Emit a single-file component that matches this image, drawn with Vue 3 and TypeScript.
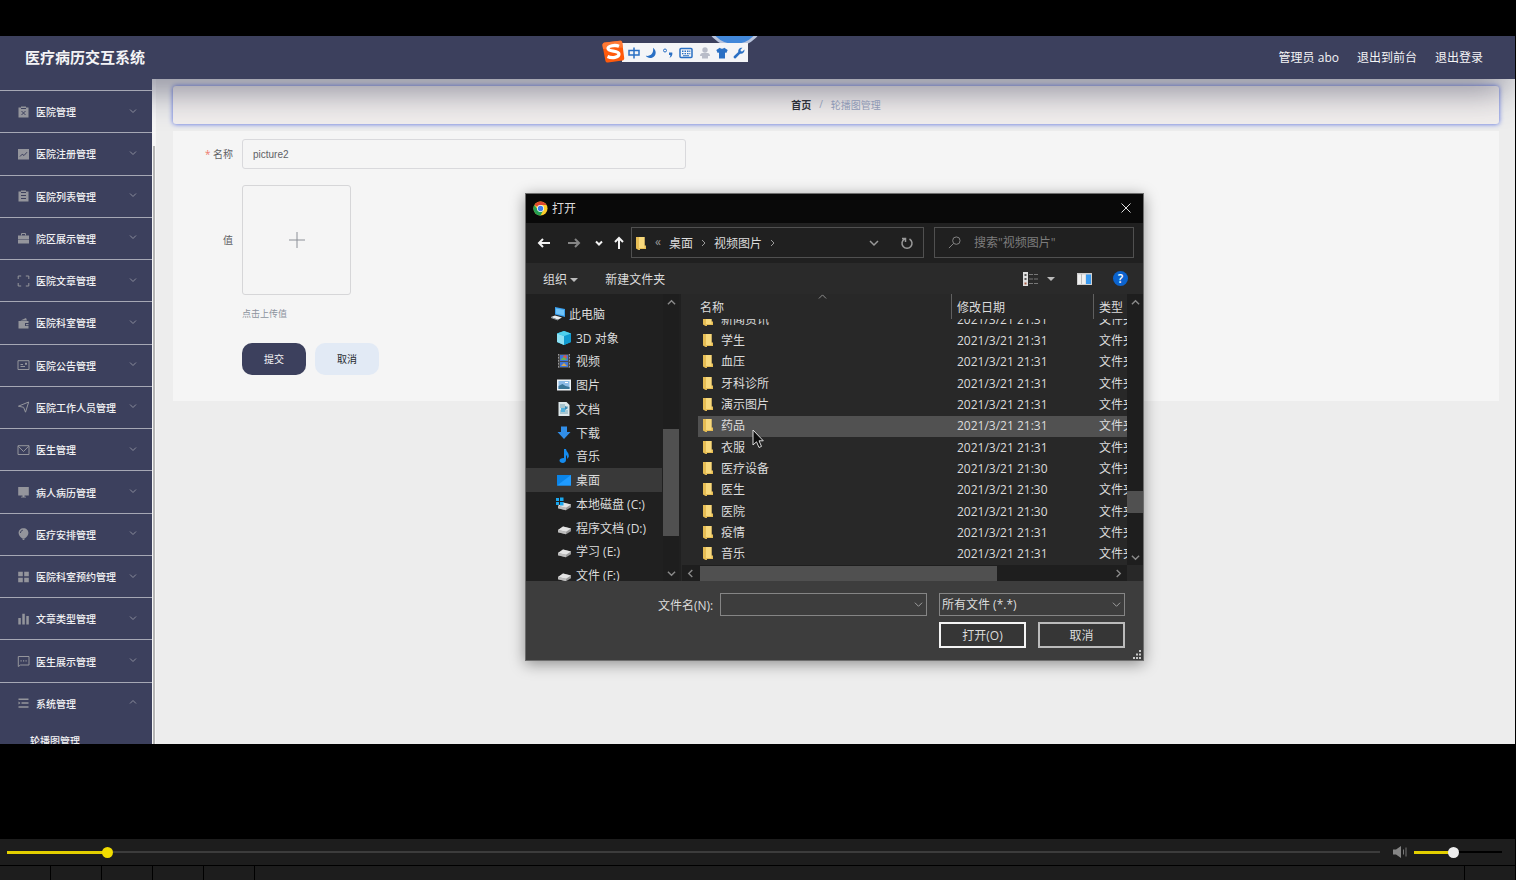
<script setup lang="ts">
import { computed, ref } from 'vue'

interface MenuItem {
  label: string
  icon: string
  open?: boolean
}

interface TreeItem {
  label: string
  icon: string
  root?: boolean
}

const menu: MenuItem[] = [
  { label: '医院管理', icon: '<path class="f" d="M1 1.500h2.500V.500h5v1H11v10H1z"/><path class="d" d="M4 5l4 4M8 5l-4 4M3.500 2.500h5"/>' },
  { label: '医院注册管理', icon: '<path class="f" d="M.5 1h11v10.500H.5z"/><path class="d" d="M2.500 8.500l2.200-2.300 1.800 1.300 3-3.300"/>' },
  { label: '医院列表管理', icon: '<path class="f" d="M1 1.500h2.500V.500h5v1H11v10H1z"/><path class="d" d="M3.500 5.500h5M3.500 8.500h5M3.500 2.500h5"/>' },
  { label: '院区展示管理', icon: '<path class="f" d="M.5 3.500h11v3.500H.5zM.5 7.500h11v4H.5z"/><path class="s" d="M4 3.500v-2h4v2"/>' },
  { label: '医院文章管理', icon: '<path class="s" d="M.7 4V1h3M8.300 1h3v3M11.300 8v3h-3M3.700 11h-3V8"/>' },
  { label: '医院科室管理', icon: '<path class="f" d="M1 4h10v2H7.500v3H11v2.500H1zM3 3.500L8.500 1l1 2.500zM8.500 7H11v1.200H8.500z"/>' },
  { label: '医院公告管理', icon: '<path class="s" d="M.5 1.700h11v8.800H.5zM3 7.500h4.500M3 5.500h2.500"/><path class="f" d="M7.500 3.800h2v2h-2z"/>' },
  { label: '医院工作人员管理', icon: '<path class="s" d="M.9 5.200L11.200 1 8 11.200 6.100 6.300z"/>' },
  { label: '医生管理', icon: '<path class="s" d="M.5 1.700h11v8.800H.5zM.8 2.200L6 7.500l5.200-5.300"/>' },
  { label: '病人病历管理', icon: '<path class="f" d="M.7 1h10.600v8.500H.7zM5 9.500h2v1.200h1.500v.8h-5v-.8H5z"/>' },
  { label: '医疗安排管理', icon: '<path class="f" d="M6 .2c3 0 4.900 2.100 4.900 4.800C10.900 7 9.200 9 7.500 10.200h-3C2.800 9 1.100 7 1.100 5 1.100 2.300 3 .2 6 .2zM4.800 10.500h2.400l-.5 1.500H5.300z"/><path class="d" d="M3 5c0-1.500.8-2.500 2.300-2.800"/>' },
  { label: '医院科室预约管理', icon: '<path class="f" d="M.7.7h4.600v4.600H.7zM6.700.7h4.600v4.600H6.700zM.7 6.700h4.600v4.600H.7zM6.700 6.700h4.600v4.600H6.700z"/>' },
  { label: '文章类型管理', icon: '<path class="f" d="M.8 5h2.500v6.500H.8zM4.800.8h2.500v10.700H4.800zM8.800 3h2.500v8.500H8.800z"/>' },
  { label: '医生展示管理', icon: '<path class="s" d="M.8 1.500h10.700v8.500H3l-2.200 1.500z"/><path class="f" d="M3 5.200h1.200v1.200H3zM5.500 5.200h1.200v1.200H5.500zM8 5.200h1.200v1.200H8z"/>' },
  { label: '系统管理', icon: '<path class="f" d="M1 1.500h10v1.500H1zM4 5.300h7v1.500H4zM1 9.200h10v1.500H1zM1 4.500v3l2-1.500z"/>', open: true },
]

const drive = '<path d="M2 10l5-3.500 8 2v2.700l-5 3-8-2z" fill="#999"/><path d="M2 10l5-3.500 8 2-5 3.200z" fill="#e4e4e4"/><path d="M2 10v2.200l8 2v-2.500z" fill="#bdbdbd"/>'

const tree: TreeItem[] = [
  { label: '此电脑', root: true, icon: '<path d="M5 1l10 2v8L5 8.500z" fill="#3aa0ef"/><path d="M6 2.500l8 1.500v5.500L6 7.500z" fill="#70c4fa"/><path d="M1 11l4-1.500 7 2-4 2.200z" fill="#e8edf0"/><path d="M1 11v1l7 2.500v-.8z" fill="#9ba8b0"/>' },
  { label: '3D 对象', icon: '<path d="M8 1l7 2.500v8.500l-7 3-7-3V3.500z" fill="#24b3df"/><path d="M1 3.500L8 6v9l-7-3z" fill="#8de1f3"/><path d="M8 6l7-2.500V12l-7 3z" fill="#0f9ad0"/><path d="M1 3.500L8 1l7 2.500L8 6z" fill="#4fd0ed"/>' },
  { label: '视频', icon: '<path d="M2 1h12v14H2z" fill="#4a4a4a"/><path d="M2.500 1v14M13.500 1v14" stroke="#999" stroke-dasharray="1.500 1.500"/><path d="M4 2h8v6H4zM4 9h8v5H4z" fill="#4076d8"/><path d="M7 3l3-1 1 3-3 1z" fill="#dc5748"/><path d="M5 6l3-2 3 3H5z" fill="#64b25a"/><path d="M5 13l3-3 3 3z" fill="#d6a652"/>' },
  { label: '图片', icon: '<path d="M1 2.500h14v11H1z" fill="#eef3f6"/><path d="M2.500 4h11v8h-11z" fill="#8dbbe6"/><path d="M2.500 12V9l4-2 3 2 4 1v2z" fill="#397597"/><path d="M9 5h3v1H9z" fill="#fff"/>' },
  { label: '文档', icon: '<path d="M2.500 1h8l3 3v11h-11z" fill="#dde7ea"/><path d="M4 4h5M4 6h8M4 10h8M4 12h8" stroke="#73a4b5"/><path d="M5 7h4v4H5z" fill="#52b1dc"/><path d="M9 5l3 2-3 2z" fill="#3587b4"/>' },
  { label: '下载', icon: '<path d="M5 1.500h6V7h3.500L8 14 1.500 7H5z" fill="#318ee8"/>' },
  { label: '音乐', icon: '<path d="M8 1h2c.4 3 3.300 3.500 2.800 8L11 11c.7-3-1-4-1-4v5c0 1.600-1.400 3-3.200 3C5 15 3.500 14 3.500 12.500S5 10.200 8 10z" fill="#158bee"/>' },
  { label: '桌面', icon: '<path d="M1 3h14v10.500H1z" fill="#0a84e8"/><path d="M1 13.500L15 3v10.500z" fill="#1f9bff"/>' },
  { label: '本地磁盘 (C:)', icon: drive + '<path d="M0 2h3v3H0zM4 1.500h3.500V5H4zM0 6h3v3H0zM4 6h3.500v3.500H4z" fill="#1aa8ef"/>' },
  { label: '程序文档 (D:)', icon: drive },
  { label: '学习 (E:)', icon: drive },
  { label: '文件 (F:)', icon: drive },
]

const files: [string, string][] = [
  ['新闻资讯', '31'],
  ['学生', '31'],
  ['血压', '31'],
  ['牙科诊所', '31'],
  ['演示图片', '31'],
  ['药品', '31'],
  ['衣服', '31'],
  ['医疗设备', '30'],
  ['医生', '30'],
  ['医院', '30'],
  ['疫情', '31'],
  ['音乐', '31'],
]

const title = ref('picture2')
const fileName = ref('')
const search = ref('')
const filter = ref('all')
const position = ref(70)
const volume = ref(44)
const positionFill = computed(() => ({ '--fill': position.value / 10 + '%' }))
const volumeFill = computed(() => ({ '--fill': volume.value + '%' }))
</script>

<template>
  <div class="player">
    <div class="stage">
      <header class="topbar">
        <h1>医疗病历交互系统</h1>
        <nav class="account">
          <span>管理员 abo</span>
          <a href="#front">退出到前台</a>
          <a href="#logout">退出登录</a>
        </nav>
      </header>

      <div class="body">
        <aside class="sidebar">
          <button v-for="m in menu" :key="m.label" type="button" class="menu-item">
            <svg class="menu-icon" viewBox="0 0 12 12" v-html="m.icon"></svg>
            <span>{{ m.label }}</span>
            <svg class="arrow" :class="{ up: m.open }" viewBox="0 0 8 8"><path d="M1 2.500l3 3 3-3" /></svg>
          </button>
          <a class="submenu" href="#carousel">轮播图管理</a>
        </aside>
        <div class="side-scroll"></div>
        <main class="content">
          <nav class="crumbs">
            <a href="#home">首页</a><i>/</i><span>轮播图管理</span>
          </nav>
          <form class="form" @submit.prevent>
            <label class="label" for="name"><em>*</em> 名称</label>
            <input id="name" v-model="title" class="name" type="text" />
            <label class="label" for="upload">值</label>
            <div class="value">
              <button id="upload" type="button" class="upload" aria-label="上传">
                <svg viewBox="0 0 18 18"><path d="M9 1v16M1 9h16" /></svg>
              </button>
              <p>点击上传值</p>
            </div>
            <div class="actions">
              <button type="submit" class="primary">提交</button>
              <button type="button">取消</button>
            </div>
          </form>
        </main>
      </div>

      <div class="ball"></div>
      <div class="ime">
        <svg class="sogou" viewBox="0 0 24 24">
          <path d="M4 2.500L19 .8c1.300-.1 2 .5 2.200 1.700l2 15.500c.1 1.300-.4 2.200-1.700 2.500L7 22.500c-1.400.2-2.300-.4-2.600-1.700L1.500 5.500C1.300 3.700 2.200 2.700 4 2.500z" fill="#ff5a0c" />
          <path d="M4 2.500L19 .8c1.300-.1 2 .5 2.200 1.700l.6 5L2 9 1.500 5.500C1.300 3.700 2.200 2.700 4 2.500z" fill="#ff7a35" />
          <path d="M18 6.200C14 4.500 6.800 5.800 7 8.700c.3 3.300 11 1.600 11 5.300 0 3.500-7 4.600-11.500 2.500" fill="none" stroke="#fff" stroke-width="3.200" />
        </svg>
        <svg viewBox="0 0 12 12"><path d="M1 3.500h10v4.500H1zM6 .5v11" class="line" /></svg>
        <svg viewBox="0 0 12 12"><path d="M8 .8c4 3 3.300 8-.5 9.700-2.800 1.200-5.500.2-6.700-1.700C5.500 9.500 9 6.500 8 .8z" /></svg>
        <svg viewBox="0 0 12 12"><circle cx="3" cy="3.500" r="1.500" class="thin" /><path d="M7 5.500h3.200c.7 2.300-.7 4.800-2.700 5.200.7-1 1-1.800.8-2.700H7z" /></svg>
        <svg class="kb" viewBox="0 0 14 12"><rect x="1" y="1.500" width="12" height="9" rx="1" class="line" /><path d="M3 3.500h1.500V5H3zM5.500 3.500H7V5H5.500zM8 3.500h1.500V5H8zM10.300 3.500h1V5h-1zM3 6h1.500v1.200H3zM5.500 6H7v1.200H5.500zM8 6h1.500v1.200H8zM10.300 6h1v1.200h-1zM4 8.300h6v1H4z" /></svg>
        <svg class="muted" viewBox="0 0 12 12"><circle cx="6" cy="3" r="2.700" /><path d="M3 6h6c1.500.5 2 1.500 2 3H9v2.500H3V9H1c0-1.500.5-2.500 2-3z" /></svg>
        <svg viewBox="0 0 12 12"><path d="M3.800.8c1 1.200 3.400 1.200 4.400 0L11.700 3 10.300 6 9 5.500v6H3v-6L1.700 6 .3 3z" /></svg>
        <svg viewBox="0 0 12 12"><path d="M.8 9.300l4.500-4.200C4.800 2.500 6.700.3 9.500.7L7.500 2.800l.3 1.500 1.500.3 2.200-2c.3 2.900-2 4.600-4.400 4.100L2.700 11.200C1.500 12 0 10.400.8 9.300z" /></svg>
      </div>

      <section class="dialog" role="dialog" aria-label="打开">
        <div class="caption">
          <svg class="chrome" viewBox="0 0 16 16">
            <circle cx="8" cy="8" r="7.500" fill="#fbcc2b" />
            <path d="M8 8L1.500 4.250A7.500 7.500 0 0 1 14.500 4.250H8z" fill="#e0492f" />
            <path d="M1.500 4.250A7.500 7.500 0 0 0 8 15.500l3-5.700-5.500 0z" fill="#259f52" />
            <circle cx="8" cy="8" r="3.700" fill="#fff" /><circle cx="8" cy="8" r="2.900" fill="#3b7ded" />
          </svg>
          <span>打开</span>
          <button type="button" class="close" aria-label="关闭"><svg viewBox="0 0 12 12"><path d="M1.500 1.500l9 9M10.500 1.500l-9 9" /></svg></button>
        </div>

        <div class="navrow">
          <button type="button" class="bright" aria-label="后退"><svg viewBox="0 0 14 14"><path d="M13 7H2M6 3L2 7l4 4" /></svg></button>
          <button type="button" class="dim" aria-label="前进"><svg viewBox="0 0 14 14"><path d="M1 7h11M8 3l4 4-4 4" /></svg></button>
          <button type="button" class="bright recent" aria-label="最近"><svg viewBox="0 0 10 14"><path d="M2 5.500l3 3 3-3" /></svg></button>
          <button type="button" class="bright" aria-label="上移"><svg viewBox="0 0 14 14"><path d="M7 13V2M3 6l4-4 4 4" /></svg></button>
          <div class="address">
            <svg class="folder" viewBox="0 0 12 14"><path d="M1 1h8.500v8.500h1.500V13H5v1H3.500L1 12.500z" fill="#e6bd55" /><path d="M4 1h5.500v11H4z" fill="#f8d97c" /></svg>
            <small>«</small>
            <span>桌面</span>
            <svg class="sep" viewBox="0 0 6 10"><path d="M1 2l3 3-3 3" /></svg>
            <span>视频图片</span>
            <svg class="sep" viewBox="0 0 6 10"><path d="M1 2l3 3-3 3" /></svg>
            <svg class="drop" viewBox="0 0 10 10"><path d="M1 3l4 4 4-4" /></svg>
            <svg class="reload" viewBox="0 0 14 14"><path d="M4.500 3A5 5 0 1 0 9.500 3M2 2.500h3.500V6" /></svg>
          </div>
          <label class="search">
            <svg viewBox="0 0 14 14"><circle cx="9" cy="5" r="4" /><path d="M6 8l-5 5" /></svg>
            <input v-model="search" type="text" placeholder='搜索"视频图片"' aria-label="搜索" />
          </label>
        </div>

        <div class="tools">
          <button type="button">组织 <i class="caret"></i></button>
          <button type="button" class="new">新建文件夹</button>
          <button type="button" class="view" aria-label="更改视图">
            <svg viewBox="0 0 15 14"><path d="M0 0h5v14H0z" fill="#dedede" /><path d="M1.500 2h2v2h-2z" fill="#555" /><path d="M1.500 6h2v2h-2z" fill="#555" /><path d="M1.500 10.500h2v2h-2z" fill="#a65a43" /><path d="M6 2.500h4M11 2.500h4M6 7h4M11 7h4M6 11.500h4M11 11.500h4" stroke="#777" /></svg>
            <i class="caret"></i>
          </button>
          <button type="button" class="pane" aria-label="预览窗格">
            <svg viewBox="0 0 15 12"><path d="M0 0h15v12H0z" fill="#cfcfcf" /><path d="M1 1.500h7.500V11H1z" fill="#f0f0f0" /><path d="M4.500 1v10" stroke="#bbb" /><path d="M9 1.500h5V11H9z" fill="#3a9af0" /></svg>
          </button>
          <button type="button" class="help" aria-label="帮助">?</button>
        </div>

        <div class="panes">
          <ul class="tree">
            <li v-for="t in tree" :key="t.label" :class="{ root: t.root, on: t.label === '桌面' }">
              <svg viewBox="0 0 16 16" v-html="t.icon"></svg>{{ t.label }}
            </li>
          </ul>
          <div class="vbar tree-bar">
            <svg viewBox="0 0 10 10"><path d="M1 7l4-4 4 4" /></svg>
            <div class="track"><div class="thumb"></div></div>
            <svg viewBox="0 0 10 10"><path d="M1 3l4 4 4-4" /></svg>
          </div>
          <div class="list">
            <div class="rows">
              <table>
                <colgroup><col class="c-name" /><col class="c-date" /><col /></colgroup>
                <thead>
                  <tr>
                    <th>名称<svg class="sort" viewBox="0 0 10 6"><path d="M1 5l4-4 4 4" /></svg></th>
                    <th>修改日期</th>
                    <th>类型</th>
                  </tr>
                </thead>
                <tbody>
                  <tr v-for="f in files" :key="f[0]" :class="{ hover: f[0] === '药品' }">
                    <td>
                      <svg class="folder" viewBox="0 0 12 14"><path d="M1 1h8.500v8.500h1.500V13H5v1H3.500L1 12.500z" fill="#e6bd55" /><path d="M4 1h5.500v11H4z" fill="#f8d97c" /></svg>{{ f[0] }}
                    </td>
                    <td>2021/3/21 21:{{ f[1] }}</td>
                    <td>文件夹</td>
                  </tr>
                </tbody>
              </table>
            </div>
            <div class="vbar list-bar">
              <svg viewBox="0 0 10 10"><path d="M1 7l4-4 4 4" /></svg>
              <div class="track"><div class="thumb"></div></div>
              <svg viewBox="0 0 10 10"><path d="M1 3l4 4 4-4" /></svg>
            </div>
            <div class="hbar">
              <svg viewBox="0 0 10 10"><path d="M7 1L3 5l4 4" /></svg>
              <div class="track"><div class="thumb"></div></div>
              <svg viewBox="0 0 10 10"><path d="M3 1l4 4-4 4" /></svg>
            </div>
          </div>
        </div>

        <div class="foot">
          <label for="file">文件名(N):</label>
          <div class="combo">
            <input id="file" v-model="fileName" type="text" />
            <svg viewBox="0 0 10 10"><path d="M1 3l4 4 4-4" /></svg>
          </div>
          <div class="combo filter">
            <select v-model="filter" aria-label="文件类型">
              <option value="all">所有文件 (*.*)</option>
            </select>
            <svg viewBox="0 0 10 10"><path d="M1 3l4 4 4-4" /></svg>
          </div>
          <div class="buttons">
            <button type="button" class="default">打开(O)</button>
            <button type="button">取消</button>
          </div>
          <svg class="grip" viewBox="0 0 10 10"><path d="M7 0h2v2H7zM4 3.500h2v2H4zM7 3.500h2v2H7zM1 7h2v2H1zM4 7h2v2H4zM7 7h2v2H7z" /></svg>
        </div>
      </section>

      <svg class="cursor" viewBox="0 0 12 20"><path d="M1 1v15l3.500-3.200L7 18.500l2.500-1.100L7 11.800h4.300z" /></svg>
    </div>

    <div class="controls">
      <input v-model.number="position" class="seek" type="range" min="0" max="1000" :style="positionFill" aria-label="进度" />
      <svg class="speaker" viewBox="0 0 16 14"><path d="M1 4.500h3L9 1v12L4 9.500H1z" fill="#858585" /><path d="M11.500 4.500v5M14 2.500v9" stroke="#777" /></svg>
      <input v-model.number="volume" class="volume" type="range" min="0" max="100" :style="volumeFill" aria-label="音量" />
    </div>
    <div class="strip"><i v-for="n in 5" :key="n"></i><i class="last"></i></div>
  </div>
</template>

<style>
body {
  margin: 0;
  background: #000;
}
</style>

<style scoped>
* {
  box-sizing: border-box;
}
button,
input,
select {
  font: inherit;
  color: inherit;
  background: none;
  border: 0;
  padding: 0;
  margin: 0;
  outline: 0;
}
a {
  color: inherit;
  text-decoration: none;
}
svg {
  display: block;
  flex: none;
}
i,
em {
  font-style: normal;
}
.player {
  height: 100vh;
  min-height: 600px;
  padding-top: 36px;
  display: flex;
  flex-direction: column;
  background: #000;
  font-family: "Open Sans", "Noto Sans CJK SC", sans-serif;
  font-size: 12px;
}
.stage {
  position: relative;
  flex: 1;
  min-height: 0;
  margin: 0 1px 95px 0;
  overflow: hidden;
  display: flex;
  flex-direction: column;
  background: #ededed;
}
.topbar {
  position: relative;
  z-index: 1;
  flex: none;
  height: 43px;
  padding: 0 32px 2px 25px;
  display: flex;
  align-items: center;
  justify-content: space-between;
  background: #3c405d;
  color: #f4f4f6;
  box-shadow: 0 16px 36px -8px rgba(48, 50, 78, 0.7);
}
h1 {
  margin: 0;
  font-size: 15px;
  font-weight: 700;
}
.account {
  display: flex;
  gap: 18px;
}
.body {
  flex: 1;
  min-height: 0;
  display: flex;
}
.sidebar {
  position: relative;
  z-index: 2;
  width: 152px;
  flex: none;
  padding-top: 11px;
  display: flex;
  flex-direction: column;
  background: #3c405d;
  color: #f2f2f4;
  font-size: 10px;
  font-weight: 500;
  overflow: hidden;
}
.menu-item {
  flex: 1;
  min-height: 0;
  padding: 0 15px 0 17px;
  display: flex;
  align-items: center;
  border-top: 1px solid #a6a8b5;
  text-align: left;
}
.menu-icon {
  width: 13px;
  height: 12px;
  margin-right: 6px;
}
.menu-icon :deep(.f) {
  fill: #94959c;
}
.menu-icon :deep(.s) {
  fill: none;
  stroke: #94959c;
}
.menu-icon :deep(.d) {
  fill: none;
  stroke: #3c405d;
}
.arrow {
  width: 8px;
  height: 8px;
  margin: 0 0 2px auto;
  fill: none;
  stroke: #8b8d9c;
}
.arrow.up {
  transform: rotate(180deg);
}
.submenu {
  flex: none;
  height: 20px;
  padding-left: 30px;
  line-height: 34px;
}
.side-scroll {
  flex: none;
  width: 4px;
  padding: 67px 1px 0;
  background: linear-gradient(#b5b5b5, #b5b5b5) content-box, #f6f6f6;
}
.content {
  flex: 1;
  min-width: 0;
  padding: 7px 16px 0 17px;
  font-size: 10px;
  color: #5f6165;
}
.crumbs {
  height: 38px;
  padding-bottom: 2px;
  display: flex;
  align-items: center;
  justify-content: center;
  gap: 8px;
  border-radius: 3px;
  background: #f1eeed;
  box-shadow: 0 0 5px #5068e0;
  color: #8f99b5;
}
.crumbs a {
  font-weight: 700;
  color: #2d3038;
}
.crumbs a,
.crumbs i,
.crumbs span {
  position: relative;
  z-index: 2;
}
.form {
  margin-top: 7px;
  padding: 8px 0 26px;
  display: grid;
  grid-template-columns: 60px minmax(0, 444px);
  gap: 16px 9px;
  background: #f5f5f5;
}
.label {
  text-align: right;
  line-height: 30px;
}
.label em {
  color: #ef7a6d;
}
.label[for='upload'] {
  line-height: 110px;
}
.name {
  height: 30px;
  padding: 0 10px;
  border: 1px solid #d9d9dc;
  border-radius: 3px;
  font-family: "Liberation Sans", "Noto Sans CJK SC", sans-serif;
}
.upload {
  display: grid;
  place-items: center;
  width: 109px;
  height: 110px;
  border: 1px solid #d6d6d8;
  border-radius: 3px;
}
.upload svg {
  width: 18px;
  fill: none;
  stroke: #8c9097;
}
.value p {
  margin: 12px 0 6px;
  font-size: 9px;
  line-height: 14px;
  color: #8c939d;
}
.actions {
  grid-column: 2;
  display: flex;
  gap: 9px;
}
.actions button {
  width: 64px;
  height: 32px;
  padding-bottom: 2px;
  border-radius: 10px;
  background: #e2eaf5;
  color: #292b31;
}
.actions .primary {
  background: #3c405d;
  color: #f4f4f6;
}
.ball {
  position: absolute;
  z-index: 2;
  left: 705px;
  top: -48px;
  width: 59px;
  height: 59px;
  border: 3px solid #b9c4dc;
  border-radius: 50%;
  background: #4288da;
}
.ime {
  position: absolute;
  z-index: 3;
  left: 622px;
  top: 7px;
  width: 126px;
  height: 19px;
  padding: 0 3px 0 6px;
  display: flex;
  align-items: center;
  justify-content: space-between;
  background: #f4f5f7;
  fill: #2a70c4;
}
.ime svg {
  width: 12px;
  height: 12px;
}
.ime .kb {
  width: 14px;
}
.ime .muted {
  fill: #b8bcc8;
}
.ime .line,
.ime .thin {
  fill: none;
  stroke: #2a70c4;
  stroke-width: 1.5;
}
.ime .thin {
  stroke-width: 1;
}
.ime .sogou {
  position: absolute;
  left: -21px;
  top: -3px;
  width: 24px;
  height: 24px;
}
.dialog {
  position: absolute;
  z-index: 4;
  left: 525px;
  top: 157px;
  width: 619px;
  border: 1px solid #6e6e6e;
  background: #202020;
  color: #dcdcdc;
  box-shadow: 0 3px 14px rgba(0, 0, 0, 0.4);
}
.caption {
  height: 29px;
  padding: 0 11px 1px 7px;
  display: flex;
  align-items: center;
  gap: 4px;
  background: #090909;
}
.chrome {
  width: 15px;
}
.close {
  margin-left: auto;
}
.close svg {
  width: 12px;
  fill: none;
  stroke: #ddd;
}
.navrow {
  height: 40px;
  padding: 0 9px 1px 11px;
  display: flex;
  align-items: center;
}
.navrow button {
  margin-right: 16px;
}
.navrow button svg {
  width: 14px;
  height: 14px;
}
.navrow .recent {
  margin: 0 8px 0 -3px;
}
.navrow .recent svg {
  width: 10px;
}
.navrow .recent + button {
  margin-right: 5px;
}
.navrow svg {
  fill: none;
}
.bright {
  stroke: #f3f3f3;
  stroke-width: 2;
}
.dim {
  stroke: #858585;
  stroke-width: 2;
}
.address {
  flex: 1;
  height: 31px;
  padding: 0 9px 0 3px;
  display: flex;
  align-items: center;
  border: 1px solid #505050;
  stroke: #999;
}
.folder {
  width: 12px;
  height: 14px;
  stroke: none;
}
.address small {
  margin: 0 8px 2px;
  font-size: 12px;
  color: #999;
}
.sep {
  width: 6px;
  height: 10px;
  margin: 0 7px 0 8px;
}
.drop {
  width: 10px;
  margin: 0 21px 0 auto;
  stroke-width: 1.5;
}
.reload {
  width: 14px;
  stroke-width: 1.5;
}
.search {
  width: 200px;
  height: 31px;
  margin-left: 10px;
  padding: 0 13px;
  display: flex;
  align-items: center;
  gap: 13px;
  border: 1px solid #505050;
}
.search svg {
  width: 13px;
  stroke: #8a8a8a;
}
.search input {
  min-width: 0;
  flex: 1;
}
.search input::placeholder {
  color: #7d7d7d;
  opacity: 1;
}
.tools {
  height: 31px;
  padding: 0 15px 0 17px;
  display: flex;
  align-items: center;
  background: #2a2a2a;
}
.caret {
  display: inline-block;
  border: 4px solid transparent;
  border-top-color: #bbb;
  border-bottom: 0;
  vertical-align: middle;
}
.new {
  margin-left: 27px;
}
.view {
  margin-left: auto;
  display: flex;
  align-items: center;
  gap: 9px;
}
.view svg {
  width: 15px;
}
.pane {
  margin-left: 22px;
}
.pane svg {
  width: 15px;
}
.help {
  width: 15px;
  height: 15px;
  margin-left: 21px;
  border-radius: 50%;
  background: #0b63ce;
  color: #fff;
  line-height: 15px;
  font-weight: 600;
}
.panes {
  height: 287px;
  display: flex;
  overflow: hidden;
}
.tree {
  flex: 1;
  height: 285px;
  margin: 8px 0 0;
  padding: 0;
  display: grid;
  grid-auto-rows: 1fr;
  list-style: none;
}
.tree li {
  min-height: 0;
  padding-left: 30px;
  display: flex;
  align-items: center;
  gap: 4px;
  white-space: nowrap;
}
.tree .root {
  padding-left: 24px;
  gap: 3px;
}
.tree .on {
  background: #393939;
}
.tree svg {
  width: 16px;
  height: 16px;
}
.vbar,
.hbar {
  display: flex;
  align-items: center;
  background: #1e1e1e;
  fill: none;
  stroke: #8b8b8b;
  stroke-width: 1.5;
}
.vbar {
  flex-direction: column;
  width: 16px;
  padding: 4px 0 3px;
}
.vbar svg,
.hbar svg {
  width: 9px;
  height: 9px;
}
.track {
  flex: 1;
  display: flex;
  width: 100%;
}
.vbar .track {
  flex-direction: column;
}
.thumb {
  background: #505050;
}
.tree-bar {
  margin-left: 1px;
}
.tree-bar .thumb {
  height: 41%;
  margin-top: 122px;
}
.list {
  width: 462px;
  margin-left: 2px;
  padding-left: 1px;
  display: grid;
  grid-template: 271px 16px / 1fr 16px;
  background: #282828;
}
.rows {
  min-width: 0;
  margin-left: 16px;
  overflow: hidden;
  display: flex;
  flex-direction: column;
  justify-content: flex-end;
}
table {
  flex: none;
  width: 100%;
  height: 281px;
  table-layout: fixed;
  border-collapse: separate;
  border-spacing: 0;
}
.c-name {
  width: 253px;
}
.c-date {
  width: 142px;
}
th {
  position: sticky;
  top: 0;
  height: 25px;
  padding: 1px 0 0 5px;
  background: #282828;
  border-left: 1px solid #606060;
  text-align: left;
  font-weight: 400;
  white-space: nowrap;
}
th:first-child {
  padding-left: 1px;
  border-left-color: transparent;
}
.sort {
  position: absolute;
  left: 119px;
  top: 0;
  width: 9px;
  fill: none;
  stroke: #999;
}
td {
  padding: 0 0 0 6px;
  line-height: 18px;
  white-space: nowrap;
  overflow: hidden;
}
td:first-child {
  padding-left: 4px;
}
td .folder {
  display: inline-block;
  margin-right: 7px;
  vertical-align: -2px;
}
.hover {
  background: #515151;
}
.list-bar .thumb {
  height: 22px;
  margin-top: 184px;
}
.hbar {
  padding: 0 4px 0 4px;
}
.hbar .track {
  height: 15px;
  margin: 0 2px 0 5px;
}
.hbar .thumb {
  width: 72%;
}
.foot {
  position: relative;
  height: 79px;
  padding: 12px 18px 0 132px;
  display: grid;
  grid-template-columns: 57px 207px 186px;
  grid-template-rows: 23px 26px;
  gap: 6px 0;
  align-items: center;
  background: #3d3d3d;
}
.foot label {
  white-space: nowrap;
}
.combo {
  height: 23px;
  margin-left: 5px;
  margin-right: -5px;
  padding: 0 3px;
  display: flex;
  align-items: center;
  border: 1px solid #858585;
}
.combo svg {
  width: 9px;
  fill: none;
  stroke: #aaa;
}
.combo input,
.combo select {
  flex: 1;
  min-width: 0;
  height: 100%;
  appearance: none;
}
.filter {
  margin-left: 17px;
  margin-right: -17px;
  padding-left: 2px;
}
.buttons {
  grid-column: 3;
  margin-left: 17px;
  margin-right: -17px;
  display: flex;
  gap: 12px;
}
.buttons button {
  flex: 1;
  height: 26px;
  border: 2px solid #bbb;
  background: #363636;
}
.buttons .default {
  border-color: #f4f4f4;
}
.grip {
  position: absolute;
  right: 1px;
  bottom: 0;
  width: 10px;
  fill: #c8c8c8;
}
.cursor {
  position: absolute;
  z-index: 5;
  left: 752px;
  top: 393px;
  width: 12px;
  height: 20px;
  fill: #0c0c0c;
  stroke: #ddd;
}
.controls {
  flex: none;
  height: 26px;
  margin-right: 1px;
  padding: 0 13px 0 7px;
  display: flex;
  align-items: center;
  background: #1d1d1d;
}
.seek,
.volume {
  --rest: #3c3c3c;
  --knob: #f1dc00;
  appearance: none;
  height: 11px;
  background:
    linear-gradient(#e3cf00, #e3cf00) left center / var(--fill) 3px no-repeat,
    linear-gradient(var(--rest), var(--rest)) center / 100% 2px no-repeat;
}
.seek {
  flex: 1;
  min-width: 0;
}
.volume {
  --rest: #000;
  --knob: #eee;
  width: 88px;
}
.seek::-webkit-slider-thumb,
.volume::-webkit-slider-thumb {
  appearance: none;
  width: 11px;
  height: 11px;
  border-radius: 50%;
  background: var(--knob);
}
.speaker {
  width: 16px;
  height: 14px;
  margin: 0 6px 0 12px;
}
.strip {
  flex: none;
  height: 14px;
  margin: 1px 1px 0 0;
  display: flex;
  background: #1d1d1d;
}
.strip i {
  width: 51px;
  border-right: 1px solid #000;
}
.strip .last {
  margin-left: auto;
  border-right: 0;
  border-left: 1px solid #000;
}
</style>
